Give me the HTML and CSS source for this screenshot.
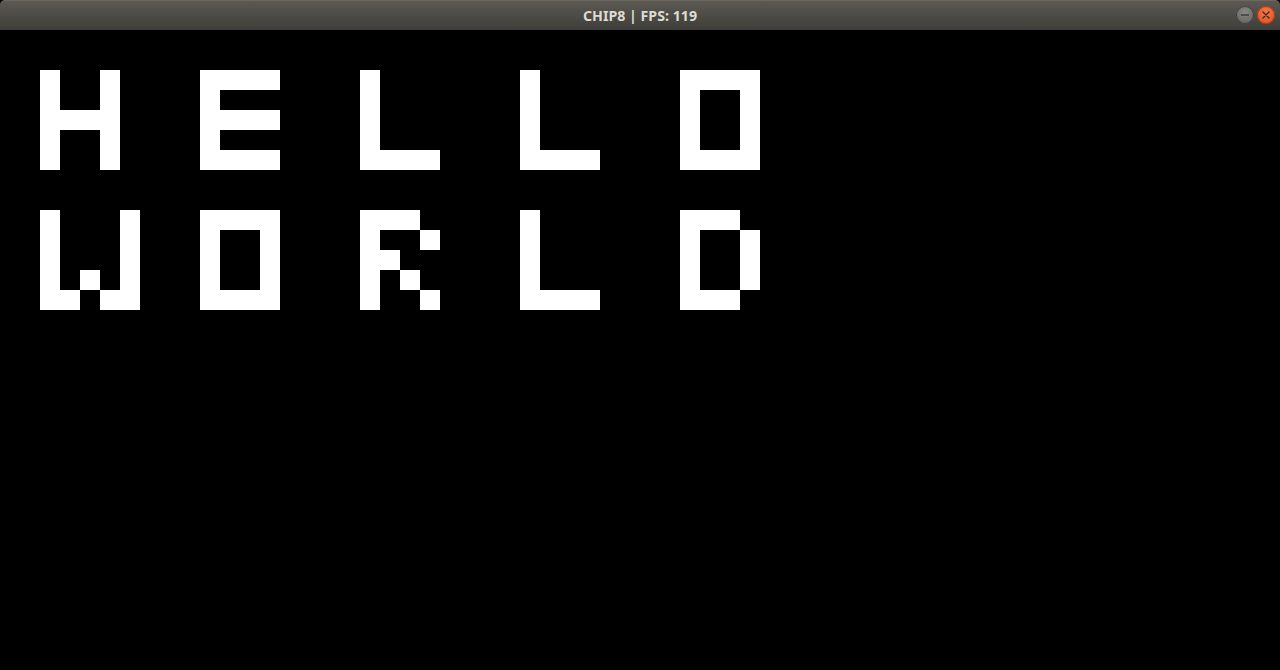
FILE: index.html
```html
<!DOCTYPE html>
<html>
<head>
<meta charset="utf-8">
<title>CHIP8</title>
<link rel="stylesheet" href="styles.css">
</head>
<body>
<div class="window">
  <header class="titlebar">
    <span class="title">CHIP8 | FPS: 119</span>
    <div class="controls">
      <span class="btn btn-min"><svg width="18" height="18" viewBox="0 0 18 18"><line x1="5" y1="9" x2="13" y2="9" stroke="#3a3936" stroke-width="1.4"/></svg></span>
      <span class="btn btn-close"><svg width="18" height="18" viewBox="0 0 18 18"><path d="M6 6 L12 12 M12 6 L6 12" stroke="#3a2a22" stroke-width="1.4" stroke-linecap="round"/></svg></span>
    </div>
  </header>
  <main class="screen" id="screen"></main>
</div>
<script src="script.js"></script>
</body>
</html>
```
FILE: styles.css
```css
html, body {
  margin: 0;
  padding: 0;
  background: #000;
}
.window {
  width: 1280px;
  height: 670px;
  display: flex;
  flex-direction: column;
  overflow: hidden;
}
.titlebar {
  height: 30px;
  flex: 0 0 30px;
  position: relative;
  display: flex;
  align-items: center;
  justify-content: center;
  background: linear-gradient(#5b5952, #3e3d39);
  border-top: 1px solid #6a685f;
  box-sizing: border-box;
  border-radius: 5px 5px 0 0;
}
.title {
  font-family: "Noto Sans", "Open Sans", sans-serif;
  font-weight: bold;
  font-size: 14.2px;
  color: #dfdbd2;
  letter-spacing: 0;
}
.controls {
  position: absolute;
  right: 5px;
  top: 5px;
  display: flex;
  gap: 3px;
}
.btn {
  width: 18px;
  height: 18px;
  border-radius: 50%;
  display: flex;
}
.btn-min {
  background: radial-gradient(circle at 50% 35%, #8a8983, #5d5c57);
  box-shadow: inset 0 0 0 1px #3f3e3a;
}
.btn-close {
  background: radial-gradient(circle at 50% 35%, #f5784a, #e1491a);
  box-shadow: inset 0 0 0 1px #9c3b1a;
}
.screen {
  flex: 1;
  display: grid;
  grid-template-columns: repeat(64, 20px);
  grid-template-rows: repeat(32, 20px);
  background: #000;
}
.px {
  background: #fff;
}
```
FILE: script.js
```js
(function () {
  var glyphs = {
    H: ["1001","1001","1111","1001","1001"],
    E: ["1111","1000","1111","1000","1111"],
    L: ["1000","1000","1000","1000","1111"],
    O: ["1111","1001","1001","1001","1111"],
    W: ["10001","10001","10001","10101","11011"],
    R: ["1110","1001","1100","1010","1001"],
    D: ["1110","1001","1001","1001","1110"]
  };
  var lines = [["HELLO", 2], ["WORLD", 9]];
  var screen = document.getElementById("screen");
  lines.forEach(function (line) {
    var word = line[0], top = line[1];
    for (var i = 0; i < word.length; i++) {
      var g = glyphs[word[i]];
      var left = 2 + i * 8;
      for (var r = 0; r < g.length; r++) {
        for (var c = 0; c < g[r].length; c++) {
          if (g[r][c] === "1") {
            var d = document.createElement("div");
            d.className = "px";
            d.style.gridRow = (top + r + 1) + "";
            d.style.gridColumn = (left + c + 1) + "";
            screen.appendChild(d);
          }
        }
      }
    }
  });
})();
```
